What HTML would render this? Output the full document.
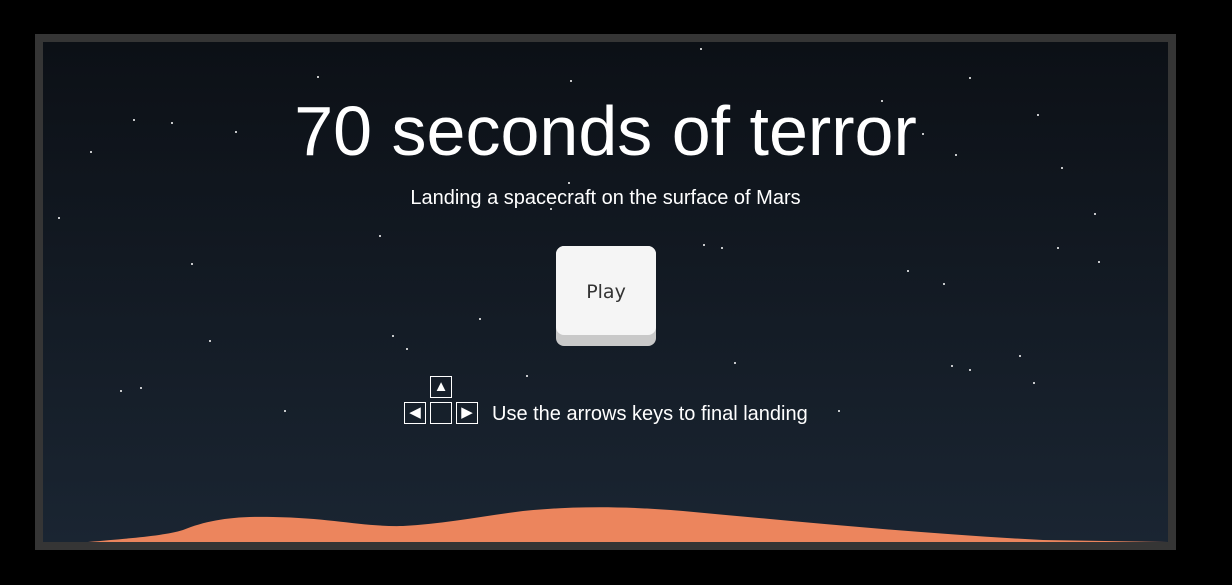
<!DOCTYPE html>
<html><head><meta charset="utf-8"><style>
html,body{margin:0;padding:0;background:#000;width:1232px;height:585px;overflow:hidden;font-family:"Liberation Sans",sans-serif}
#frame{position:absolute;left:35px;top:34px;width:1125px;height:500px;border:8px solid #353535;background:linear-gradient(#0c1016,#1a2532);overflow:hidden}
.s{position:absolute;width:2px;height:2px;background:#fff;border-radius:1px}
h1{position:absolute;left:0;width:1125px;top:49px;margin:0;text-align:center;color:#fff;font-weight:normal;font-size:70px}
.sub{position:absolute;left:0;width:1125px;top:145px;text-align:center;color:#fff;font-size:20px}
.btn{position:absolute;left:513px;top:204px;width:100px;height:100px;border-radius:8px;background:#c9c9c9}
.btn div{height:89px;border-radius:8px;background:#f5f5f5;color:#333;font-family:"DejaVu Sans",sans-serif;font-size:19px;text-align:center;line-height:92px}
.k{position:absolute;width:20px;height:20px;border:1.5px solid #fff;color:#fff;font-size:15px;text-align:center;line-height:20px}
.hint{position:absolute;left:449px;top:361px;color:#fff;font-size:20px}
</style></head><body>
<div id="frame">
<div class="s" style="left:657px;top:6px"></div><div class="s" style="left:274px;top:34px"></div><div class="s" style="left:90px;top:77px"></div><div class="s" style="left:128px;top:80px"></div><div class="s" style="left:47px;top:109px"></div><div class="s" style="left:15px;top:175px"></div><div class="s" style="left:336px;top:193px"></div><div class="s" style="left:148px;top:221px"></div><div class="s" style="left:436px;top:276px"></div><div class="s" style="left:349px;top:293px"></div><div class="s" style="left:363px;top:306px"></div><div class="s" style="left:97px;top:345px"></div><div class="s" style="left:77px;top:348px"></div><div class="s" style="left:241px;top:368px"></div><div class="s" style="left:483px;top:333px"></div><div class="s" style="left:678px;top:205px"></div><div class="s" style="left:660px;top:202px"></div><div class="s" style="left:691px;top:320px"></div><div class="s" style="left:795px;top:368px"></div><div class="s" style="left:926px;top:327px"></div><div class="s" style="left:908px;top:323px"></div><div class="s" style="left:990px;top:340px"></div><div class="s" style="left:976px;top:313px"></div><div class="s" style="left:864px;top:228px"></div><div class="s" style="left:900px;top:241px"></div><div class="s" style="left:1014px;top:205px"></div><div class="s" style="left:1055px;top:219px"></div><div class="s" style="left:1051px;top:171px"></div><div class="s" style="left:1018px;top:125px"></div><div class="s" style="left:912px;top:112px"></div><div class="s" style="left:994px;top:72px"></div><div class="s" style="left:926px;top:35px"></div><div class="s" style="left:838px;top:58px"></div><div class="s" style="left:879px;top:91px"></div><div class="s" style="left:527px;top:38px"></div><div class="s" style="left:525px;top:140px"></div><div class="s" style="left:507px;top:166px"></div><div class="s" style="left:192px;top:89px"></div><div class="s" style="left:166px;top:298px"></div>
<h1>70 seconds of terror</h1>
<div class="sub">Landing a spacecraft on the surface of Mars</div>
<div class="btn"><div>Play</div></div>
<div class="k" style="left:387px;top:334px">▲</div>
<div class="k" style="left:361px;top:360px">◀</div>
<div class="k" style="left:387px;top:360px"></div>
<div class="k" style="left:413px;top:360px">▶</div>
<div class="hint">Use the arrows keys to final landing</div>
<svg style="position:absolute;left:0;top:0" width="1125" height="500"><path d="M45 500 C90 496 120 494 140 488 C165 478 190 474 230 475 C290 476 320 485 360 484 C400 482 440 474 480 469 C530 464 580 464 640 469 C760 480 880 492 1000 498 L1125 500 Z" fill="#ec855d"/></svg>
</div>
</body></html>
